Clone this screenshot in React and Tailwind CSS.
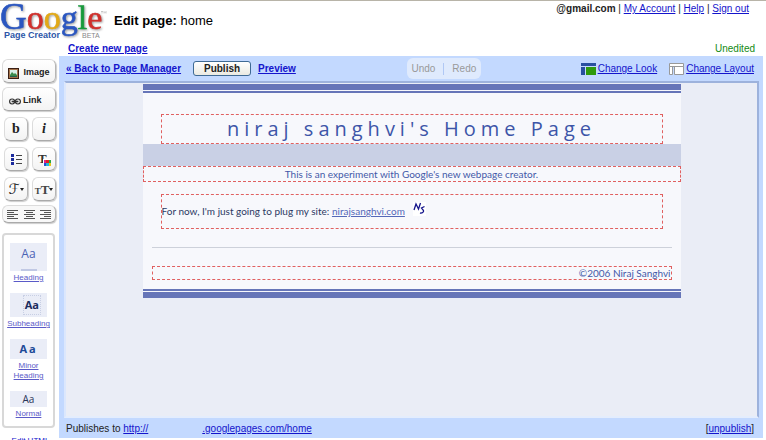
const linkClass = 'text-[#1414cc] underline';

const Logo = () => (
  <div className="w-[108px] shrink-0">
    <svg width="108" height="40" viewBox="0 0 108 40" role="img" aria-label="Google Page Creator" className="block overflow-visible">
      <text
        x="0"
        y="28"
        fontFamily="'Liberation Serif', serif"
        fontSize="34"
        strokeWidth="0.6"
        className="drop-shadow-[1px_1px_1px_#00000066]"
      >
        <tspan fontSize="37" fill="#2a56c0" stroke="#2a56c0">G</tspan>
        <tspan fill="#d0302c" stroke="#d0302c">o</tspan>
        <tspan fill="#e2a917" stroke="#e2a917">o</tspan>
        <tspan fill="#2a56c0" stroke="#2a56c0">g</tspan>
        <tspan fill="#179a3b" stroke="#179a3b">l</tspan>
        <tspan fill="#d0302c" stroke="#d0302c">e</tspan>
      </text>
      <path d="M101 10.500h2M102 10.500v2M104 12.500v-2l1 1 1-1v2" fill="none" stroke="#999" strokeWidth="0.5" />
      <text x="4" y="37" fontSize="9" fontWeight="bold" fill="#2d56a8" fontFamily="'Liberation Sans', sans-serif">Page Creator</text>
      <text x="82" y="37" fontSize="7" fill="#888" fontFamily="'Liberation Sans', sans-serif">BETA</text>
    </svg>
  </div>
);

const ToolButton = ({ label, className = 'w-6', children }) => (
  <button
    type="button"
    aria-label={label}
    className={`flex h-6 shrink-0 items-center justify-center rounded-md border border-[#dcdcdc] border-r-[#b5b5b5] border-b-[#aaa] bg-linear-to-b from-white to-[#f3f3f3] shadow-[1px_1px_1px_#ccc] ${className}`}
  >
    {children}
  </button>
);

const ImageIcon = () => (
  <svg width="11" height="11" viewBox="0 0 11 11">
    <rect width="11" height="11" fill="#3a1f14" />
    <rect x="1" y="1" width="9" height="9" fill="#a5734a" />
    <rect x="2" y="2" width="7" height="7" fill="#d9efe8" />
    <path d="M2 7l2-3 2 2 1-1 2 2v2H2z" fill="#3a8a4b" />
    <path d="M2 8h7v1H2z" fill="#245e50" />
  </svg>
);

const ChainIcon = () => (
  <svg width="12" height="7" viewBox="0 0 12 7" fill="none" stroke="#333" strokeWidth="1.2">
    <rect x="0.6" y="1" width="5" height="5" rx="2.4" />
    <rect x="6.4" y="1" width="5" height="5" rx="2.4" />
    <path d="M2.6 3.5h6.8" strokeWidth="1.6" />
  </svg>
);

const BulletsIcon = () => (
  <svg width="11" height="11" viewBox="0 0 11 11">
    {[0, 4, 8].map((y) => (
      <g key={y}>
        <rect x="0" y={y} width="3" height="3" fill="#1c2a9c" />
        <rect x="5" y={y + 1} width="6" height="1" fill="#444" />
      </g>
    ))}
  </svg>
);

const TextColorIcon = () => (
  <svg width="14" height="13" viewBox="0 0 14 13" className="overflow-visible">
    <text x="1" y="10" fontSize="13" fontWeight="bold" fill="#333" fontFamily="'Liberation Serif', serif">T</text>
    <rect x="6" y="6" width="8" height="7" fill="#fff" />
    <rect x="7" y="7" width="2" height="3" fill="#e0218a" />
    <rect x="9" y="7" width="3" height="3" fill="#e02020" />
    <rect x="12" y="7" width="2" height="3" fill="#28a745" />
    <rect x="7" y="10" width="2" height="3" fill="#2a4bd0" />
    <rect x="9" y="10" width="3" height="3" fill="#25b8d6" />
    <rect x="12" y="10" width="2" height="3" fill="#e8c51c" />
  </svg>
);

const Caret = () => (
  <svg width="4" height="3" viewBox="0 0 4 3">
    <path d="M0 0h4L2 3z" fill="#222" />
  </svg>
);

const AlignIcon = ({ lines }) => (
  <svg width="11" height="9" viewBox="0 0 11 9" fill="#555">
    {lines.map(([x, width], i) => (
      <rect key={i} x={x} y={i * 2} width={width} height="1" />
    ))}
  </svg>
);

const alignments = [
  { label: 'Align left', lines: [[0, 11], [0, 7], [0, 11], [0, 7], [0, 11]] },
  { label: 'Align center', lines: [[0, 11], [2, 7], [0, 11], [2, 7], [0, 11]] },
  { label: 'Align right', lines: [[0, 11], [4, 7], [0, 11], [4, 7], [0, 11]] },
];

const StyleOption = ({ label, preview, className = '' }) => (
  <a href="#" className={`flex w-full flex-col items-center text-center text-[8px] leading-[10px] text-[#5a5ac8] ${className}`}>
    {preview}
    <span className="underline">{label}</span>
  </a>
);

const Sidebar = () => (
  <aside className="flex w-[59px] shrink-0 flex-col items-start pl-0.5 pt-[18px]">
    <ToolButton className="w-[54px] gap-1 pt-1">
      <ImageIcon />
      <span className="text-[9px] font-bold text-[#222]">Image</span>
    </ToolButton>
    <ToolButton className="mt-1 w-[54px] justify-start gap-0.5 pt-1 pl-1.5">
      <ChainIcon />
      <span className="text-[9px] font-bold text-[#222]">Link</span>
    </ToolButton>
    <div className="mt-1.5 grid shrink-0 grid-cols-2 gap-x-1 gap-y-1.5 pl-0.5">
      <ToolButton label="Bold">
        <span className="font-['Liberation_Serif',serif] text-sm font-bold leading-none">b</span>
      </ToolButton>
      <ToolButton label="Italic">
        <span className="font-['Liberation_Serif',serif] text-sm font-bold italic leading-none">i</span>
      </ToolButton>
      <ToolButton label="Bulleted list">
        <BulletsIcon />
      </ToolButton>
      <ToolButton label="Text color">
        <TextColorIcon />
      </ToolButton>
      <ToolButton label="Font">
        <span className="font-['DejaVu_Sans',serif] text-sm leading-none">ℱ</span>
        <Caret />
      </ToolButton>
      <ToolButton label="Text size">
        <span className="font-['Liberation_Serif',serif] text-[9px] leading-none font-bold text-[#444]">
          T<span className="text-[13px]">T</span>
        </span>
        <Caret />
      </ToolButton>
    </div>
    <div className="mt-1 flex h-[18px] w-[54px] shrink-0 items-center justify-between rounded-md border border-[#dcdcdc] border-r-[#b5b5b5] border-b-[#aaa] bg-[#f8f8f8] px-1 shadow-[1px_1px_1px_#ccc]">
      {alignments.map(({ label, lines }) => (
        <button key={label} type="button" aria-label={label}>
          <AlignIcon lines={lines} />
        </button>
      ))}
    </div>
    <div className="mt-2.5 flex w-[53px] shrink-0 flex-col items-center rounded-sm border-2 border-[#d8d8d8] pt-2 pb-[7px]">
      <StyleOption
        label="Heading"
        preview={
          <span className="mb-0.5 flex h-7 w-[37px] flex-col items-center justify-between bg-[#eaedf7] pt-1 font-['Open_Sans',sans-serif] text-xs leading-[14px] text-[#4a62b5]">
            Aa
            <span className="h-0.5 w-4 bg-[#c0c8e4]" />
          </span>
        }
      />
      <StyleOption
        label="Subheading"
        className="mt-2.5"
        preview={
          <span className="mb-0.5 flex h-6 w-[37px] items-center justify-end bg-[#eaedf7] pr-1.5 font-['Open_Sans',sans-serif] text-[11px] font-bold text-[#1c2c5e]">
            <span className="flex h-5 items-center border border-dotted border-[#c8cfe4] px-px">Aa</span>
          </span>
        }
      />
      <StyleOption
        label="Minor Heading"
        className="mt-2.5"
        preview={
          <span className="mb-0.5 flex h-5 w-[37px] items-center justify-center bg-[#eaedf7] font-['Open_Sans',sans-serif] text-[11px] font-bold tracking-[2px] text-[#1d4a98]">
            Aa
          </span>
        }
      />
      <StyleOption
        label="Normal"
        className="mt-2.5"
        preview={
          <span className="mb-0.5 flex h-4 w-[37px] items-center justify-center bg-[#eaedf7] font-['Open_Sans',sans-serif] text-[10px] text-[#2a3558]">
            Aa
          </span>
        }
      />
    </div>
    <a href="#" className="mt-2 shrink-0 self-center whitespace-nowrap text-[8px] leading-[10px] text-[#1414cc] underline">
      Edit HTML
    </a>
  </aside>
);

const LayoutIcon = ({ layout }) => (
  <svg width="15" height="12" viewBox="0 0 15 12">
    {layout ? (
      <path d="M0.5 0.5h14v3h-14zM0.5 3.5h3v8h-3zM5.5 3.5h9v8h-9z" fill="#fff" stroke="#999" />
    ) : (
      <>
        <rect width="15" height="3" fill="#2850a0" />
        <rect y="4" width="4" height="8" fill="#2850a0" />
        <rect x="5" y="4" width="10" height="8" fill="#2e9a0c" />
      </>
    )}
  </svg>
);

const Toolbar = () => (
  <div className="flex h-[25px] items-center pr-[5px] pl-0.5 text-[10px]">
    <a href="#" className={`${linkClass} font-bold`}>« Back to Page Manager</a>
    <button
      type="button"
      className="ml-3 h-[15px] w-[58px] rounded-[3px] border border-[#3f6a94] bg-linear-to-b from-white to-[#ebeae2] text-[10px] leading-3 font-bold"
    >
      Publish
    </button>
    <a href="#" className={`${linkClass} ml-[7px] font-bold`}>Preview</a>
    <div className="ml-[111px] flex h-[21px] w-[74px] items-center justify-center rounded-md bg-[#dfeafd] text-[#999]">
      <button type="button">Undo</button>
      <span className="mx-2 h-3 w-px bg-[#b0c8f5]" />
      <button type="button">Redo</button>
    </div>
    <a href="#" className={`${linkClass} ml-auto flex items-center gap-0.5`}>
      <LayoutIcon />
      Change Look
    </a>
    <a href="#" className={`${linkClass} ml-3 flex items-center gap-0.5`}>
      <LayoutIcon layout />
      Change Layout
    </a>
  </div>
);

const SitePage = () => (
  <article className="mx-auto flex w-full max-w-[538px] flex-col bg-[#f7f8fc] font-[Lato,sans-serif] text-[10px] text-[#4358a8]">
    <div className="h-[9px] border-t-[6px] border-b-2 border-[#6675b8]" />
    <div className="px-[18px] pt-[21px]">
      <h1 className="h-[30px] border border-dashed border-[#e06060] text-center font-['Open_Sans',sans-serif] text-[20px] leading-7 tracking-[5px] text-[#3d55a8]">
        niraj sanghvi's Home Page
      </h1>
    </div>
    <div className="h-[22px] bg-[#c9d0e5]" />
    <p className="border border-dashed border-[#e06060] text-center leading-[14px]">
      This is an experiment with Google's new webpage creator.
    </p>
    <div className="mx-[18px] mt-3 flex h-[35px] items-center border border-dashed border-[#e06060] text-[#2c3863]">
      <p>
        For now, I'm just going to plug my site:{' '}
        <a href="#" className="text-[#5468b8] underline">nirajsanghvi.com</a>
      </p>
      <svg width="13" height="14" viewBox="0 0 13 14" className="mb-1.5 ml-2" fill="none" stroke="#15158c" strokeWidth="1.3" role="img" aria-label="NS">
        <rect width="13" height="14" fill="#fff" stroke="none" />
        <path d="M1 8L3 2l2.500 5L7.500 1M11.500 4.500L8.500 6l2 2.500c.5 1.500-1.500 3-3.500 2.500" />
      </svg>
    </div>
    <hr className="mx-[9px] mt-[18px] border-[#cdd1da]" />
    <footer className="mx-[9px] mt-[18px] mb-[9px] border border-dashed border-[#e06060] text-right leading-3">
      ©2006 Niraj Sanghvi
    </footer>
    <div className="h-[9px] border-t-2 border-b-[6px] border-[#6675b8]" />
  </article>
);

export default function App() {
  return (
    <div className="flex h-screen flex-col overflow-hidden border-t border-[#b8b4a8] bg-white font-['Liberation_Sans',Arial,sans-serif] text-[10px] text-[#222]">
      <header className="flex h-10 shrink-0 items-start">
        <Logo />
        <h1 className="mt-[11px] ml-1.5 text-[13px] leading-[18px] text-black">
          <strong>Edit page:</strong> home
        </h1>
        <nav className="mt-0.5 mr-[17px] ml-auto leading-3">
          <strong>@gmail.com</strong> | <a href="#" className={linkClass}>My Account</a> |{' '}
          <a href="#" className={linkClass}>Help</a> | <a href="#" className={linkClass}>Sign out</a>
        </nav>
      </header>

      <div className="flex min-h-0 flex-1">
        <Sidebar />
        <main className="mr-[3px] mb-0.5 flex min-w-0 flex-1 flex-col">
          <div className="flex h-[15px] shrink-0 items-center justify-between pr-2 pl-[9px]">
            <a href="#" className={`${linkClass} font-bold`}>Create new page</a>
            <span className="text-[#138a13]">Unedited</span>
          </div>
          <div className="flex min-h-0 flex-1 flex-col bg-[#c3d9ff] pr-1 pl-[5px]">
            <Toolbar />
            <section className="min-h-0 flex-1 border-2 border-t-[#9db2dc] border-r-[#9db2dc] border-b-[#e4edfd] border-l-[#dbe7fd] bg-[#eaedf6] pt-px">
              <SitePage />
            </section>
            <div className="flex h-5 shrink-0 items-center justify-between pr-[5px] pl-0.5">
              <p>
                Publishes to <a href="#" className={linkClass}>http://</a>
                <a href="#" className={`${linkClass} ml-[54px]`}>.googlepages.com/home</a>
              </p>
              <p>
                [<a href="#" className={linkClass}>unpublish</a>]
              </p>
            </div>
          </div>
        </main>
      </div>
    </div>
  );
}
